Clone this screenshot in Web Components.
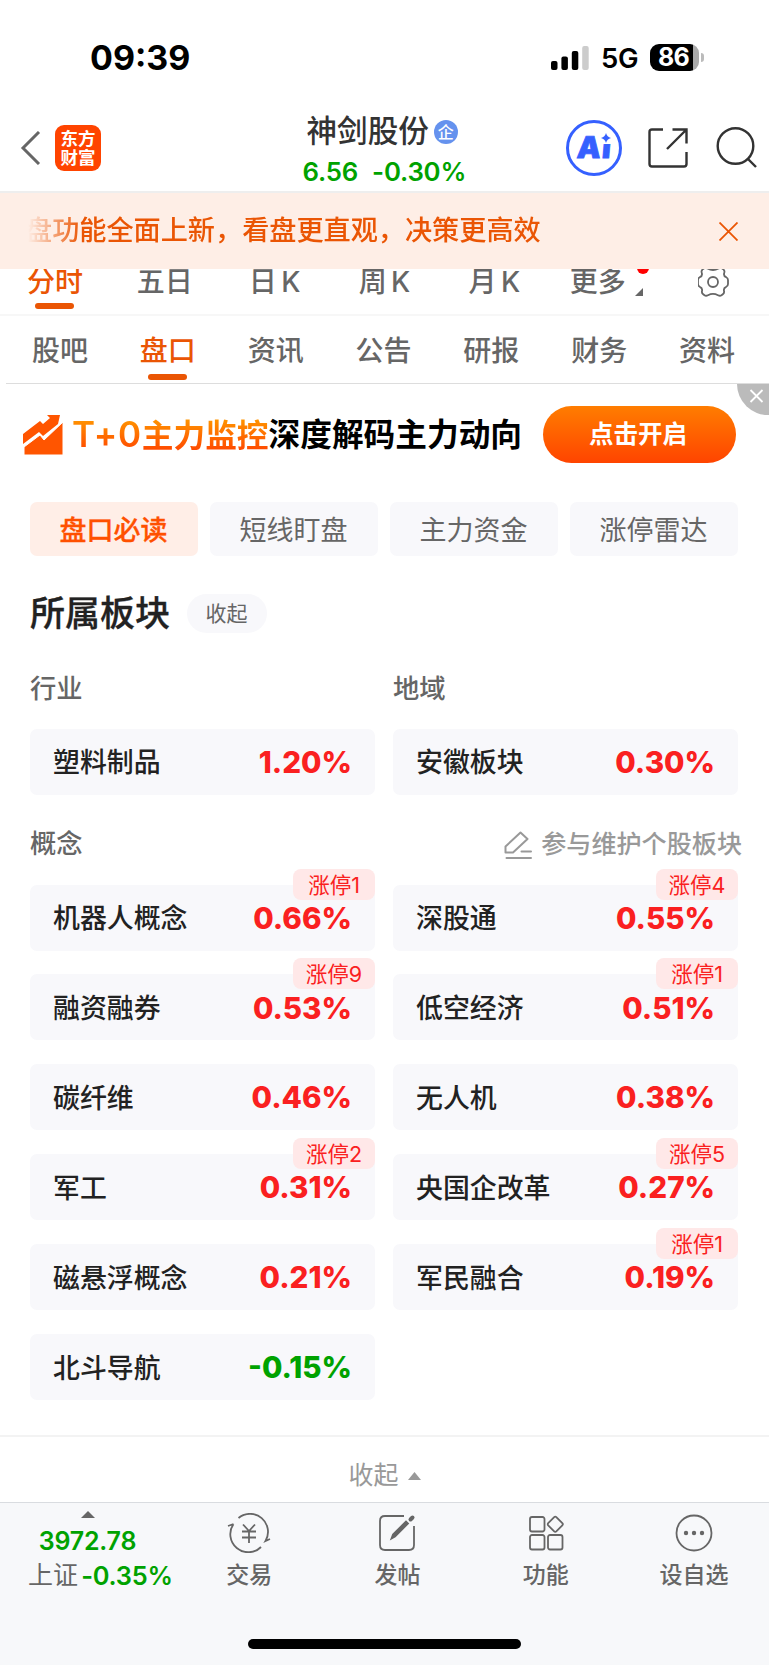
<!DOCTYPE html>
<html lang="zh-CN">
<head>
<meta charset="UTF-8">
<meta name="viewport" content="width=device-width, initial-scale=1.0">
<title>神剑股份</title>
<style>
    body {
        margin: 0;
        background: #fff;
        font-family: Inter, "Noto Sans CJK SC", sans-serif;
        color: #222;
        line-height: 1;
    }
</style>
</head>
<body>
<stock-page></stock-page>

<script>
    // Small helper: every component renders its markup into an open shadow root
    class BaseElement extends HTMLElement {
        connectedCallback() {
            if (this.shadowRoot) return;
            this.attachShadow({ mode: 'open' });
            this.shadowRoot.innerHTML = this.render();
        }
    }

    class StatusBar extends BaseElement {
        render() {
            return `
            <style>
                :host {
                    display: flex;
                    align-items: center;
                    justify-content: space-between;
                    height: 96px;
                    padding: 19px 65px 0 90px;
                    box-sizing: border-box;
                    color: #000;
                }
                .time {
                    font-size: 34px;
                    font-weight: 700;
                }
                .right {
                    display: flex;
                    align-items: center;
                }
                .net {
                    font-size: 27.5px;
                    font-weight: 600;
                    letter-spacing: -0.5px;
                    margin: 3px 12px 0 12px;
                }
                .battery {
                    display: flex;
                    align-items: center;
                }
                .level {
                    width: 49px;
                    height: 27px;
                    border-radius: 9px;
                    background: linear-gradient(90deg, #000 43px, #aaa 43px);
                    color: #fff;
                    font-size: 25px;
                    font-weight: 700;
                    line-height: 27px;
                    text-indent: 8px;
                    letter-spacing: -0.8px;
                }
                .cap {
                    width: 3px;
                    height: 9px;
                    margin-left: 2px;
                    border-radius: 0 4px 4px 0;
                    background: #bbb;
                }
            </style>
            <span class="time">09:39</span>
            <div class="right">
                <svg width="38" height="24" viewBox="0 0 38 24">
                    <rect x="0" y="15" width="6.5" height="9" rx="2"/>
                    <rect x="10.4" y="10.5" width="6.5" height="13.5" rx="2"/>
                    <rect x="20.8" y="5" width="6.5" height="19" rx="2"/>
                    <rect x="31.2" y="0" width="6.5" height="24" rx="2" fill="#ccc"/>
                </svg>
                <span class="net">5G</span>
                <div class="battery"><div class="level">86</div><div class="cap"></div></div>
            </div>`;
        }
    }

    class StockHeader extends BaseElement {
        render() {
            return `
            <style>
                :host {
                    display: grid;
                    grid-template-columns: 1fr 160px 1fr;
                    align-items: center;
                    height: 97px;
                    padding: 8px 12px 0 20px;
                    box-sizing: border-box;
                    border-bottom: 2px solid #eee;
                }
                .left, .tools, .name {
                    display: flex;
                    align-items: center;
                }
                .logo {
                    width: 46px;
                    height: 46px;
                    margin-left: 14px;
                    border-radius: 9px;
                    background: #ff4400;
                    color: #fff;
                    font-size: 17.5px;
                    font-weight: 700;
                    line-height: 19px;
                    text-align: center;
                    padding-top: 4px;
                    box-sizing: border-box;
                }
                .center {
                    white-space: nowrap;
                    margin: 6px 0 0 -6px;
                }
                .name {
                    font-size: 30.6px;
                    font-weight: 500;
                    color: #333;
                    gap: 5px;
                    margin-left: 4px;
                }
                .badge {
                    width: 24px;
                    height: 24px;
                    border-radius: 50%;
                    background: #6592ee;
                    color: #fff;
                    font-size: 16px;
                    line-height: 24px;
                    text-align: center;
                }
                .price {
                    display: flex;
                    gap: 14px;
                    margin-top: 12px;
                    font-size: 25.800px;
                    font-weight: 600;
                    letter-spacing: -0.2px;
                    color: #00a200;
                }
                .tools {
                    justify-content: flex-end;
                }
                .ai {
                    position: relative;
                    display: flex;
                    justify-content: center;
                    width: 56px;
                    height: 56px;
                    border: 3px solid #3560ff;
                    border-radius: 50%;
                    box-sizing: border-box;
                    color: #3560ff;
                    font-size: 30px;
                    font-weight: 900;
                    line-height: 49px;
                }
                .ai span {
                    display: inline-block;
                    transform: skewX(-5deg);
                    -webkit-text-stroke: 0.8px #3560ff;
                }
                /* the sparkle takes the place of the dot */
                .ai .i {
                    clip-path: inset(21px -4px 0 -4px);
                    margin-left: 2px;
                }
                .ai svg {
                    position: absolute;
                    left: 32px;
                    top: 10px;
                }
            </style>
            <div class="left">
                <svg width="21" height="34" viewBox="0 0 21 34" fill="none" stroke="#666" stroke-width="3"><path d="M19 1 3 17l16 16"/></svg>
                <div class="logo">东方<br>财富</div>
            </div>
            <div class="center">
                <div class="name">神剑股份<div class="badge">企</div></div>
                <div class="price"><span>6.56</span><span>-0.30%</span></div>
            </div>
            <div class="tools">
                <div class="ai"><span>A</span><span class="i">i</span>
                    <svg width="10" height="10" viewBox="0 0 10 10" fill="#3560ff"><path d="M5 0Q6 4 10 5Q6 6 5 10Q4 6 0 5Q4 4 5 0z"/></svg>
                </div>
                <svg style="margin-left:26px" width="40" height="40" viewBox="0 0 40 40" fill="none" stroke="#333" stroke-width="2.4">
                    <path d="M15 1.5H4Q1.500 1.500 1.500 4V36Q1.500 38.500 4 38.500H36Q38.500 38.500 38.500 36V24"/>
                    <path d="M24.500 1.500H38.500V15.500M38 2 19 21"/>
                </svg>
                <svg style="margin-left:28px" width="41" height="41" viewBox="0 0 41 41" fill="none" stroke="#333" stroke-width="2.4">
                    <circle cx="19.500" cy="19" r="17.800"/><path d="m31.500 31.500 8.500 8.500"/>
                </svg>
            </div>`;
        }
    }

    class NoticeBar extends BaseElement {
        render() {
            return `
            <style>
                :host {
                    display: flex;
                    align-items: center;
                    justify-content: space-between;
                    height: 76px;
                    padding: 0 31px 0 25px;
                    background: #feeee6;
                    color: #ea5504;
                    position: relative;
                    z-index: 1;
                }
                span {
                    font-size: 27.15px;
                    line-height: 40px;
                    font-weight: 500;
                    white-space: nowrap;
                    -webkit-mask-image: linear-gradient(90deg, transparent 3px, #000 56px);
                    mask-image: linear-gradient(90deg, transparent 3px, #000 56px);
                }
            </style>
            <span><slot></slot></span>
            <svg width="19" height="19" viewBox="0 0 19 19" stroke="#ea5504" stroke-width="1.8"><path d="M.5.500l18 18M18.500.500l-18 18"/></svg>`;
        }
    }

    class TabItem extends BaseElement {
        render() {
            return `
            <style>
                :host {
                    display: flex;
                    flex-direction: column;
                    align-items: center;
                    flex: 1 1 0;
                    min-width: 0;
                    color: #666;
                    font-size: 28px;
                    font-weight: 500;
                    white-space: nowrap;
                    word-spacing: -3px;
                }
                :host([active]) {
                    color: #ea5504;
                }
                .label {
                    display: flex;
                    align-items: center;
                    height: 28px;
                }
                :host([active])::after {
                    content: '';
                    width: 39px;
                    height: 6px;
                    margin-top: var(--line-gap, 7px);
                    border-radius: 3px;
                    background: #ea5504;
                }
            </style>
            <div class="label"><slot></slot></div>`;
        }
    }

    class PeriodTabs extends BaseElement {
        render() {
            return `
            <style>
                :host {
                    display: flex;
                    height: 48px;
                    margin-top: -1px;
                    border-bottom: 2px solid #f7f7f7;
                    box-sizing: border-box;
                }
                .more {
                    position: relative;
                    display: flex;
                    align-items: flex-end;
                    gap: 9px;
                    margin-left: 4px;
                }
                .dot {
                    position: absolute;
                    right: -6px;
                    top: -6px;
                    width: 12px;
                    height: 12px;
                    border-radius: 50%;
                    background: #f00;
                }
            </style>
            <tab-item active>分时</tab-item>
            <tab-item>五日</tab-item>
            <tab-item>日 K</tab-item>
            <tab-item>周 K</tab-item>
            <tab-item>月 K</tab-item>
            <tab-item><span class="more">更多
                <svg width="8" height="8" viewBox="0 0 8 8" fill="#666"><path d="M8 0V8H0z"/></svg>
                <i class="dot"></i></span></tab-item>
            <tab-item><svg width="32" height="32" viewBox="-15 -16 32 32" fill="none" stroke="#666" stroke-width="1.800" stroke-linejoin="round">
                <path d="M-5.500-13.500Q-7-15-8.800-13.700L-10.600-12.400Q-12-11-11.200-9Q-10.300-6-13.200-4.800Q-15-4-15-2V2Q-15 4-13.200 4.800Q-10.300 6-11 9Q-11.500 11-9.800 12.300L-8.500 13.300Q-7 14.300-5 13.200Q0 10.500 5 13.200Q7 14.300 8.500 13.300L9.800 12.300Q11.500 11 11 9Q10.300 6 13.200 4.800Q15 4 15 2V-2Q15-4 13.200-4.800Q10.300-6 11.200-9Q12-11 10.600-12.400L8.800-13.700Q7-15 5.500-13.500Q0-10.500 -5.500-13.500z"/>
                <circle r="5"/></svg></tab-item>`;
        }
    }

    class SectionTabs extends BaseElement {
        render() {
            return `
            <style>
                :host {
                    display: flex;
                    height: 68px;
                    padding: 21px 8px 0 0;
                    margin-left: 6px;
                    border-bottom: 1px solid #ddd;
                    box-sizing: border-box;
                    --line-gap: 9px;
                }
            </style>
            <tab-item>股吧</tab-item>
            <tab-item active>盘口</tab-item>
            <tab-item>资讯</tab-item>
            <tab-item>公告</tab-item>
            <tab-item>研报</tab-item>
            <tab-item>财务</tab-item>
            <tab-item>资料</tab-item>`;
        }
    }

    class PromoBanner extends BaseElement {
        render() {
            return `
            <style>
                :host {
                    position: relative;
                    display: flex;
                    align-items: center;
                    height: 101px;
                    padding: 0 33px 0 23px;
                    box-sizing: border-box;
                    overflow: hidden;
                }
                .text {
                    display: flex;
                    align-items: center;
                    margin-left: 9px;
                    font-size: 31.7px;
                    line-height: 40px;
                    font-weight: 700;
                    color: #000;
                    white-space: nowrap;
                }
                .hot {
                    background: linear-gradient(180deg, #ff9500 5px, #ff4a00 36px);
                    -webkit-background-clip: text;
                    background-clip: text;
                    -webkit-text-fill-color: transparent;
                }
                .t0 {
                    font-size: 35px;
                    font-weight: 600;
                    letter-spacing: 0.7px;
                }
                .btn {
                    margin-left: auto;
                    width: 193px;
                    height: 57px;
                    border-radius: 29px;
                    background: linear-gradient(180deg, #ff7d00, #ff4400);
                    color: #fff;
                    font-size: 24.5px;
                    font-weight: 700;
                    line-height: 56px;
                    text-align: center;
                    text-indent: -3px;
                }
                .close {
                    position: absolute;
                    right: 0;
                    top: 0;
                }
            </style>
            <svg width="40" height="40" viewBox="0 0 40 40" fill="#ff5500">
                <path d="M0 19 17 6 20 9 27 3 24 0H37L35 9 20 21 16 17 0 29z"/>
                <path d="M1 32 17 20 21 25 40 7V40H1z" stroke="#fff" stroke-width="1"/>
            </svg>
            <div class="text"><span class="hot"><span class="t0">T+0</span>主力监控</span><span>深度解码主力动向</span></div>
            <div class="btn">点击开启</div>
            <svg class="close" width="32" height="32" viewBox="0 0 32 32"><path d="M0 0H32V31A31 31 0 0 1 0 0z" fill="#bbb"/><path d="m13.500 6 12 12M25.500 6l-12 12" stroke="#fff" stroke-width="1.800"/></svg>`;
        }
    }

    class FilterChips extends BaseElement {
        render() {
            return `
            <style>
                :host {
                    display: grid;
                    grid-template-columns: repeat(4, 1fr);
                    gap: 12px;
                    padding: 17px 31px 0 30px;
                }
                div {
                    height: 54px;
                    border-radius: 7px;
                    background: #f8f8fb;
                    color: #666;
                    font-size: 27px;
                    line-height: 57px;
                    text-align: center;
                    text-indent: -1px;
                }
                .on {
                    background: #ffeee7;
                    color: #ff5000;
                    font-weight: 500;
                    -webkit-text-stroke: 0.3px #ff5000;
                }
            </style>
            <div class="on">盘口必读</div>
            <div>短线盯盘</div>
            <div>主力资金</div>
            <div>涨停雷达</div>`;
        }
    }

    // One board row: name on the left, change on the right, optional limit-up tag
    class BoardCard extends BaseElement {
        render() {
            const tag = this.getAttribute('tag');
            const value = this.getAttribute('value');
            return `
            <style>
                :host {
                    position: relative;
                    display: flex;
                    align-items: center;
                    justify-content: space-between;
                    height: 66px;
                    padding: 2px 23px 0;
                    box-sizing: border-box;
                    border-radius: 7px;
                    background: #f8f8fb;
                }
                .name {
                    font-size: 26.900px;
                    font-weight: 500;
                    color: #222;
                }
                .value {
                    font-size: 29.600px;
                    font-weight: 800;
                    color: ${value.startsWith('-') ? '#00a200' : '#fa2020'};
                }
                .tag {
                    position: absolute;
                    top: -16px;
                    right: 0;
                    width: 82px;
                    height: 31px;
                    border-radius: 8px;
                    background: #ffe8e8;
                    color: #fa2020;
                    font-size: 21.5px;
                    font-weight: 400;
                    line-height: 32px;
                    text-align: center;
                }
            </style>
            <span class="name"><slot></slot></span>
            <span class="value">${value}</span>
            ${tag ? `<span class="tag">涨停${tag}</span>` : ''}`;
        }
    }

    class BoardSection extends BaseElement {
        render() {
            return `
            <style>
                :host {
                    display: block;
                    padding: 38px 31px 0 30px;
                }
                .title {
                    display: flex;
                    align-items: center;
                    gap: 17px;
                    height: 39px;
                    font-size: 35px;
                    font-weight: 500;
                    -webkit-text-stroke: 0.3px #222;
                }
                .pill {
                    width: 80px;
                    height: 39px;
                    border-radius: 20px;
                    background: #f8f8fb;
                    color: #666;
                    font-size: 21px;
                    font-weight: 400;
                    line-height: 40px;
                    text-align: center;
                    text-indent: -1px;
                    -webkit-text-stroke: 0;
                }
                .grid {
                    display: grid;
                    grid-template-columns: 1fr 1fr;
                    column-gap: 18px;
                    row-gap: 23.900px;
                }
                .sub {
                    display: flex;
                    align-items: center;
                    font-size: 26.300px;
                    font-weight: 500;
                    height: 28px;
                    color: #666;
                }
                .labels {
                    margin: 42px 0 25.500px;
                }
                .concept {
                    justify-content: space-between;
                    margin: 36px 0 26px;
                }
                .edit {
                    display: flex;
                    align-items: center;
                    gap: 9px;
                    margin-right: -4px;
                    font-size: 25.100px;
                    color: #999;
                }
            </style>
            <div class="title"><span>所属板块</span><span class="pill">收起</span></div>
            <div class="grid labels"><div class="sub">行业</div><div class="sub">地域</div></div>
            <div class="grid">
                <board-card value="1.20%">塑料制品</board-card>
                <board-card value="0.30%">安徽板块</board-card>
            </div>
            <div class="sub concept"><span>概念</span>
                <span class="edit">
                    <svg width="28" height="28" viewBox="0 0 28 28" fill="none" stroke="#999" stroke-width="2" stroke-linecap="round" stroke-linejoin="round"><path d="M1.500 21.500V15.500L16.500 1.500 23.500 8 9 21.500zM17.500 20.500H27M2.500 27H27"/></svg>
                    <span>参与维护个股板块</span>
                </span>
            </div>
            <div class="grid">
                <board-card value="0.66%" tag="1">机器人概念</board-card>
                <board-card value="0.55%" tag="4">深股通</board-card>
                <board-card value="0.53%" tag="9">融资融券</board-card>
                <board-card value="0.51%" tag="1">低空经济</board-card>
                <board-card value="0.46%">碳纤维</board-card>
                <board-card value="0.38%">无人机</board-card>
                <board-card value="0.31%" tag="2">军工</board-card>
                <board-card value="0.27%" tag="5">央国企改革</board-card>
                <board-card value="0.21%">磁悬浮概念</board-card>
                <board-card value="0.19%" tag="1">军民融合</board-card>
                <board-card value="-0.15%">北斗导航</board-card>
            </div>`;
        }
    }

    class CollapseBar extends BaseElement {
        render() {
            return `
            <style>
                :host {
                    display: flex;
                    align-items: center;
                    justify-content: center;
                    gap: 9px;
                    height: 67px;
                    padding-top: 12px;
                    margin-top: 35.500px;
                    border-top: 2px solid #f3f3f3;
                    box-sizing: border-box;
                    font-size: 25px;
                    color: #999;
                }
            </style>
            <span><slot></slot></span>
            <svg width="13" height="8" viewBox="0 0 13 8" fill="#999"><path d="M6.500 0 13 8H0z"/></svg>`;
        }
    }

    class NavButton extends BaseElement {
        render() {
            return `
            <style>
                :host {
                    display: flex;
                    flex-direction: column;
                    align-items: center;
                    flex: 1;
                    padding-top: 10px;
                    gap: 11px;
                    font-size: 23px;
                    font-weight: 500;
                    color: #666;
                }
            </style>
            <slot name="icon"></slot>
            <span><slot></slot></span>`;
        }
    }

    class BottomNav extends BaseElement {
        render() {
            return `
            <style>
                :host {
                    display: flex;
                    flex-direction: column;
                    align-items: center;
                    justify-content: space-between;
                    flex: 1;
                    padding-bottom: 16px;
                    border-top: 1.500px solid #d9dce0;
                    background: #f7f8fa;
                }
                .row {
                    display: flex;
                    width: 100%;
                    padding-right: 1px;
                    box-sizing: border-box;
                }
                .index {
                    display: flex;
                    flex-direction: column;
                    align-items: center;
                    width: 175px;
                    padding-top: 8px;
                    box-sizing: border-box;
                    color: #00a200;
                    font-size: 25px;
                    font-weight: 600;
                    letter-spacing: -0.2px;
                    white-space: nowrap;
                }
                .num {
                    margin-top: 11px;
                }
                .sz {
                    display: flex;
                    gap: 3px;
                    margin: 9px 0 0 26px;
                    font-size: 25.400px;
                }
                .sz b {
                    color: #666;
                    font-size: 25px;
                    font-weight: 400;
                    letter-spacing: 0;
                }
                .home {
                    width: 273px;
                    height: 10px;
                    border-radius: 5px;
                    background: #000;
                }
                svg {
                    fill: none;
                    stroke: #666;
                    stroke-width: 1.800;
                }
            </style>
            <div class="row">
                <div class="index">
                    <svg width="14" height="7" viewBox="0 0 14 7"><path d="M7 0 14 7H0z" fill="#666" stroke="none"/></svg>
                    <span class="num">3972.78</span>
                    <span class="sz"><b>上证</b><span>-0.35%</span></span>
                </div>
                <nav-button>
                    <svg slot="icon" width="44" height="40" viewBox="-22 -20 44 40">
                        <path d="M-10.500-15A18 18 0 0 1 16.500 8L21 6M-15.500-9A18 18 0 0 0 12 14M-21-7-15.500-9"/>
                        <path d="M-6-8.500 0-2 6-8.500M-7-1.500H7M-7 4.500H7M0-2V10"/>
                    </svg>
                    交易
                </nav-button>
                <nav-button>
                    <svg slot="icon" width="40" height="40" viewBox="-20 -20 40 40">
                        <path d="M7-17H-12Q-17-17-17-12V12Q-17 17-12 17H12Q17 17 17 12V-7"/>
                        <path d="M-5.500 5.500-4 1.500 9-11.500 11-9.500-2 3.500z" fill="#666"/>
                        <path d="M13.500-13.500 15.500-15.500" stroke-width="4" stroke-linecap="round"/>
                    </svg>
                    发帖
                </nav-button>
                <nav-button>
                    <svg slot="icon" width="40" height="40" viewBox="-20 -20 40 40">
                        <rect x="-16" y="-16" width="14.500" height="14.500" rx="2"/>
                        <rect x="-16" y="2" width="14.500" height="14.500" rx="2"/>
                        <rect x="2" y="2" width="14.500" height="14.500" rx="2"/>
                        <rect x="3.500" y="-14.500" width="11.500" height="11.500" rx="1.500" transform="rotate(45 9.250 -8.750)"/>
                    </svg>
                    功能
                </nav-button>
                <nav-button>
                    <svg slot="icon" width="40" height="40" viewBox="-20 -20 40 40">
                        <circle r="17.500"/>
                        <g fill="#666" stroke="none"><circle cx="-8" r="2.200"/><circle r="2.200"/><circle cx="8" r="2.200"/></g>
                    </svg>
                    设自选
                </nav-button>
            </div>
            <div class="home"></div>`;
        }
    }

    class StockPage extends BaseElement {
        render() {
            return `
            <style>
                :host {
                    display: flex;
                    flex-direction: column;
                    width: 769px;
                    height: 1665px;
                    overflow: hidden;
                }
            </style>
            <status-bar></status-bar>
            <stock-header></stock-header>
            <notice-bar>盘功能全面上新，看盘更直观，决策更高效</notice-bar>
            <period-tabs></period-tabs>
            <section-tabs></section-tabs>
            <promo-banner></promo-banner>
            <filter-chips></filter-chips>
            <board-section></board-section>
            <collapse-bar>收起</collapse-bar>
            <bottom-nav></bottom-nav>`;
        }
    }

    customElements.define('status-bar', StatusBar);
    customElements.define('stock-header', StockHeader);
    customElements.define('notice-bar', NoticeBar);
    customElements.define('tab-item', TabItem);
    customElements.define('period-tabs', PeriodTabs);
    customElements.define('section-tabs', SectionTabs);
    customElements.define('promo-banner', PromoBanner);
    customElements.define('filter-chips', FilterChips);
    customElements.define('board-card', BoardCard);
    customElements.define('board-section', BoardSection);
    customElements.define('collapse-bar', CollapseBar);
    customElements.define('nav-button', NavButton);
    customElements.define('bottom-nav', BottomNav);
    customElements.define('stock-page', StockPage);
</script>
</body>
</html>
